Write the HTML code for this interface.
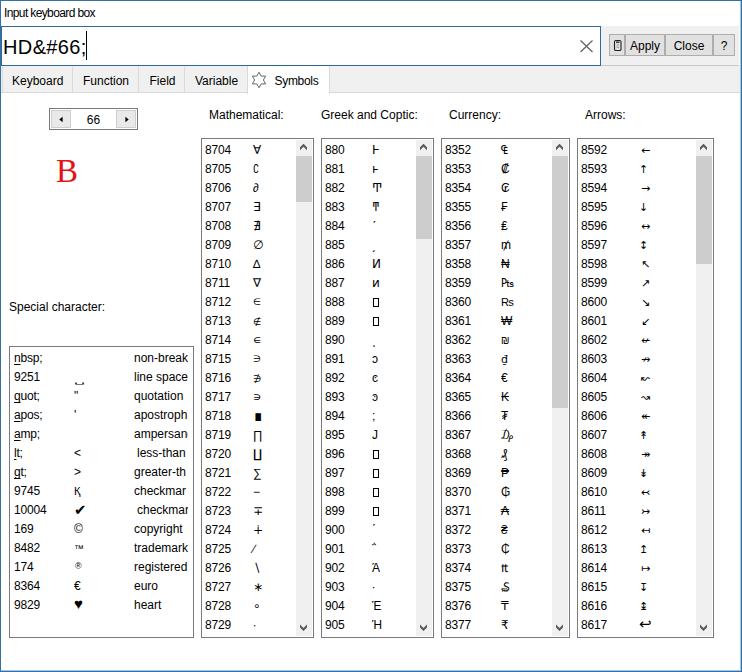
<!DOCTYPE html>
<html><head><meta charset="utf-8"><title>Input keyboard box</title>
<style>
html,body{margin:0;padding:0}
body{width:742px;height:672px;position:relative;overflow:hidden;background:#fff;font:12px/19px "Liberation Sans", "DejaVu Sans", sans-serif;color:#000}
div,span,svg,i{position:absolute;box-sizing:border-box}
u{text-decoration:underline;text-underline-offset:2px;text-decoration-skip-ink:none}
.win{left:0;top:0;width:742px;height:672px;border:1px solid #3470a5}
.edge-r{left:740px;top:1px;width:1px;height:670px;background:#9cc8ee}
.edge-b{left:1px;top:670px;width:740px;height:1px;background:#9cc8ee}
.title{left:4px;top:4px;letter-spacing:-0.62px;white-space:nowrap}
.grayp{left:601px;top:26px;width:138px;height:40px;background:#f0f0f0;border-bottom:1px solid #c8c8c8}
.tabbar{left:1px;top:66px;width:739px;height:27px;background:#f0f0f0;border-bottom:1px solid #d9d9d9}
.edit{left:1px;top:26px;width:600px;height:40px;background:#fff;border:1px solid #30689b}
.edit .t{left:1px;top:5px;font-size:20px;line-height:30px;white-space:nowrap;letter-spacing:0.37px}
.caret{left:86px;top:31px;width:1px;height:29px;background:#000}
.btn{top:34px;height:22px;background:#e1e1e1;border:1px solid #adadad;text-align:center;line-height:22px;white-space:nowrap}
.tab{top:67px;height:25px;background:#f0f0f0;border-left:1px solid #d9d9d9;border-right:1px solid #d9d9d9;line-height:25px;white-space:nowrap}
.tab span{top:2px}
.tab.sel{top:66px;height:28px;background:#fff;border-left:1px solid #d9d9d9;border-right:1px solid #d9d9d9}
.lbl{white-space:nowrap}
.lb{border:1px solid #7a7a7a;background:#fff;overflow:hidden}
.row{left:1px;height:19px;width:100%;white-space:nowrap}
.lb .row{margin-top:1px}
.n{left:2px;top:1px;letter-spacing:-0.2px}
.s{top:1px}
.sp .row{width:177px;overflow:hidden}
.sp .n{left:3px}
.sb{right:1px;top:1px;width:16px;height:496px;background:#f0f0f0}
.sb svg{left:0}
.sb .up{top:0}
.sb .dn{bottom:0}
.sb polygon{fill:#5a5a5a}
.thumb{left:0;top:16px;width:16px;background:#cdcdcd}
.tofu{display:inline-block;position:relative;width:6px;height:9px;border:1px solid #000;top:1px;left:1px}
.spin{left:49px;top:108px;width:89px;height:22px;border:1px solid #7a7a7a;background:#fff}
.spin .b{top:1px;width:20px;height:18px;background:#e9e9e9;border:1px solid #cfcfcf}
.spin .v{left:0;width:87px;text-align:center;top:1px;line-height:20px}
.bigB{left:56px;top:148px;font:33px/46px "Liberation Serif", serif;color:#e31414}
</style></head>
<body>
<div class="win"></div><div class="edge-r"></div><div class="edge-b"></div>
<div class="title">Input keyboard box</div>
<div class="grayp"></div>
<div class="tabbar"></div>
<div class="edit"><span class="t">HD&amp;#66;</span></div><div class="caret"></div>
<svg style="left:579px;top:39px" width="16" height="16" viewBox="0 0 16 16"><path d="M1.5 1.5 L13.5 13 M13.5 1.5 L1.5 13" stroke="#666" stroke-width="1.3" fill="none"/></svg>
<div class="btn" style="left:609px;width:16px"><svg style="left:3px;top:4px" width="10" height="13" viewBox="0 0 10 13"><rect x="1.5" y="1.5" width="6.5" height="10" rx="1.3" fill="none" stroke="#222" stroke-width="1.1"/><path d="M3 3.2 H6.5" stroke="#222" stroke-width="1.3"/><path d="M3.5 6 H6 M3.5 8.3 H6" stroke="#888" stroke-width="0.8"/></svg></div>
<div class="btn" style="left:625px;width:40px">Apply</div>
<div class="btn" style="left:665px;width:48px">Close</div>
<div class="btn" style="left:713px;width:22px">?</div>
<div class="tab" style="left:2px;width:71px"><span style="left:9px">Keyboard</span></div>
<div class="tab" style="left:72px;width:67px"><span style="left:10px">Function</span></div>
<div class="tab" style="left:138px;width:47px"><span style="left:10.5px">Field</span></div>
<div class="tab" style="left:184px;width:64px"><span style="left:10px">Variable</span></div>
<div class="tab sel" style="left:247px;width:83px"><svg style="left:2px;top:5px" width="18" height="18" viewBox="0 0 18 18"><polygon points="9,1.2 11.2,5.1 15.6,5.1 13.4,9 15.6,12.9 11.2,12.9 9,16.8 6.8,12.9 2.4,12.9 4.6,9 2.4,5.1 6.8,5.1" fill="none" stroke="#555" stroke-width="0.9"/></svg><span style="left:26.5px;top:3px;line-height:25px;letter-spacing:-0.3px">Symbols</span></div>
<div class="spin"><span class="v">66</span><div class="b" style="left:1px"><svg style="left:6px;top:5px" width="6" height="7" viewBox="0 0 6 7"><path d="M4.6 0.8 L1.3 3.5 L4.6 6.2 Z" fill="#000"/></svg></div><div class="b" style="left:66px"><svg style="left:7px;top:5px" width="6" height="7" viewBox="0 0 6 7"><path d="M1.4 0.8 L4.7 3.5 L1.4 6.2 Z" fill="#000"/></svg></div></div>
<div class="bigB">B</div>
<div class="lbl" style="left:209px;top:106px">Mathematical:</div>
<div class="lbl" style="left:321px;top:106px">Greek and Coptic:</div>
<div class="lbl" style="left:449px;top:106px">Currency:</div>
<div class="lbl" style="left:585px;top:106px">Arrows:</div>
<div class="lbl" style="left:9px;top:298px">Special character:</div>
<div class="lb sp" style="left:9px;width:185px;top:346px;height:292px">
<div class="row" style="top:0px"><span class="n"><u>n</u>bsp;</span><span class="s" style="left:63px"></span><span class="s" style="left:123px">non-break</span></div>
<div class="row" style="top:19px"><span class="n">9251</span><span class="s" style="left:63px"><b style="display:inline-block;font-weight:normal;transform:scale(1.45,.55);transform-origin:0 88%">␣</b></span><span class="s" style="left:123px">line space</span></div>
<div class="row" style="top:38px"><span class="n"><u>q</u>uot;</span><span class="s" style="left:63px">"</span><span class="s" style="left:123px">quotation</span></div>
<div class="row" style="top:57px"><span class="n"><u>a</u>pos;</span><span class="s" style="left:63px">'</span><span class="s" style="left:123px">apostroph</span></div>
<div class="row" style="top:76px"><span class="n"><u>a</u>mp;</span><span class="s" style="left:63px"></span><span class="s" style="left:123px">ampersand</span></div>
<div class="row" style="top:95px"><span class="n"><u>l</u>t;</span><span class="s" style="left:63px">&lt;</span><span class="s" style="left:126px">less-than</span></div>
<div class="row" style="top:114px"><span class="n"><u>g</u>t;</span><span class="s" style="left:63px">&gt;</span><span class="s" style="left:123px">greater-th</span></div>
<div class="row" style="top:133px"><span class="n">9745</span><span class="s" style="left:63px"><b style="font-weight:normal;font-size:11px">Қ</b></span><span class="s" style="left:123px">checkmar</span></div>
<div class="row" style="top:152px"><span class="n">10004</span><span class="s" style="left:63px"><b style="font-weight:normal;font-size:15px;line-height:12px;position:relative;top:1px">✔</b></span><span class="s" style="left:126px">checkmar</span></div>
<div class="row" style="top:171px"><span class="n">169</span><span class="s" style="left:63px">©</span><span class="s" style="left:123px">copyright</span></div>
<div class="row" style="top:190px"><span class="n">8482</span><span class="s" style="left:63px"><b style="font-weight:normal;font-size:10px">™</b></span><span class="s" style="left:123px">trademark</span></div>
<div class="row" style="top:209px"><span class="n">174</span><span class="s" style="left:63px"><b style="font-weight:normal;font-size:9px;position:relative;top:-2px;left:1px">®</b></span><span class="s" style="left:123px">registered</span></div>
<div class="row" style="top:228px"><span class="n">8364</span><span class="s" style="left:63px">€</span><span class="s" style="left:123px">euro</span></div>
<div class="row" style="top:247px"><span class="n">9829</span><span class="s" style="left:63px"><b style="font-weight:normal;font-size:15px;line-height:12px">♥</b></span><span class="s" style="left:123px">heart</span></div>
</div>
<div class="lb" style="left:201px;width:113px;top:138px;height:500px">
<div class="row" style="top:0px"><span class="n">8704</span><span class="s" style="left:50px;">∀</span></div>
<div class="row" style="top:19px"><span class="n">8705</span><span class="s" style="left:50px;transform:scaleX(.8);transform-origin:0 50%">∁</span></div>
<div class="row" style="top:38px"><span class="n">8706</span><span class="s" style="left:50px;">∂</span></div>
<div class="row" style="top:57px"><span class="n">8707</span><span class="s" style="left:50px;">∃</span></div>
<div class="row" style="top:76px"><span class="n">8708</span><span class="s" style="left:50px;">∄</span></div>
<div class="row" style="top:95px"><span class="n">8709</span><span class="s" style="left:50px;">∅</span></div>
<div class="row" style="top:114px"><span class="n">8710</span><span class="s" style="left:50px;">∆</span></div>
<div class="row" style="top:133px"><span class="n">8711</span><span class="s" style="left:50px;">∇</span></div>
<div class="row" style="top:152px"><span class="n">8712</span><span class="s" style="left:50px;font-size:9px">∈</span></div>
<div class="row" style="top:171px"><span class="n">8713</span><span class="s" style="left:50px;font-size:9.5px">∉</span></div>
<div class="row" style="top:190px"><span class="n">8714</span><span class="s" style="left:50px;">∊</span></div>
<div class="row" style="top:209px"><span class="n">8715</span><span class="s" style="left:50px;font-size:9px">∋</span></div>
<div class="row" style="top:228px"><span class="n">8716</span><span class="s" style="left:50px;font-size:9.5px">∌</span></div>
<div class="row" style="top:247px"><span class="n">8717</span><span class="s" style="left:50px;">∍</span></div>
<div class="row" style="top:266px"><span class="n">8718</span><span class="s" style="left:50px;font-size:16px;top:0px">∎</span></div>
<div class="row" style="top:285px"><span class="n">8719</span><span class="s" style="left:50px;">∏</span></div>
<div class="row" style="top:304px"><span class="n">8720</span><span class="s" style="left:50px;">∐</span></div>
<div class="row" style="top:323px"><span class="n">8721</span><span class="s" style="left:50px;">∑</span></div>
<div class="row" style="top:342px"><span class="n">8722</span><span class="s" style="left:50px;">−</span></div>
<div class="row" style="top:361px"><span class="n">8723</span><span class="s" style="left:50px;">∓</span></div>
<div class="row" style="top:380px"><span class="n">8724</span><span class="s" style="left:50px;">∔</span></div>
<div class="row" style="top:399px"><span class="n">8725</span><span class="s" style="left:50px;">∕</span></div>
<div class="row" style="top:418px"><span class="n">8726</span><span class="s" style="left:50px;">∖</span></div>
<div class="row" style="top:437px"><span class="n">8727</span><span class="s" style="left:50px;">∗</span></div>
<div class="row" style="top:456px"><span class="n">8728</span><span class="s" style="left:50px;">∘</span></div>
<div class="row" style="top:475px"><span class="n">8729</span><span class="s" style="left:50px;">∙</span></div>
<div class="sb"><svg class="up" width="16" height="16" viewBox="0 0 16 16"><polygon points="7.5,3.8 11,7.3 11,10.3 7.5,6.8 4,10.3 4,7.3"/></svg><div class="thumb" style="height:46px"></div><svg class="dn" width="16" height="16" viewBox="0 0 16 16"><polygon points="7.5,11 11,7.5 11,4.5 7.5,8 4,4.5 4,7.5"/></svg></div>
</div>
<div class="lb" style="left:321px;width:113px;top:138px;height:500px">
<div class="row" style="top:0px"><span class="n">880</span><span class="s" style="left:49px;">Ͱ</span></div>
<div class="row" style="top:19px"><span class="n">881</span><span class="s" style="left:49px;">ͱ</span></div>
<div class="row" style="top:38px"><span class="n">882</span><span class="s" style="left:49px;">Ͳ</span></div>
<div class="row" style="top:57px"><span class="n">883</span><span class="s" style="left:49px;">ͳ</span></div>
<div class="row" style="top:76px"><span class="n">884</span><span class="s" style="left:49px;">ʹ</span></div>
<div class="row" style="top:95px"><span class="n">885</span><span class="s" style="left:49px;">͵</span></div>
<div class="row" style="top:114px"><span class="n">886</span><span class="s" style="left:49px;">Ͷ</span></div>
<div class="row" style="top:133px"><span class="n">887</span><span class="s" style="left:49px;">ͷ</span></div>
<div class="row" style="top:152px"><span class="n">888</span><span class="s" style="left:49px;"><i class="tofu"></i></span></div>
<div class="row" style="top:171px"><span class="n">889</span><span class="s" style="left:49px;"><i class="tofu"></i></span></div>
<div class="row" style="top:190px"><span class="n">890</span><span class="s" style="left:49px;">ͺ</span></div>
<div class="row" style="top:209px"><span class="n">891</span><span class="s" style="left:49px;">ͻ</span></div>
<div class="row" style="top:228px"><span class="n">892</span><span class="s" style="left:49px;">ͼ</span></div>
<div class="row" style="top:247px"><span class="n">893</span><span class="s" style="left:49px;">ͽ</span></div>
<div class="row" style="top:266px"><span class="n">894</span><span class="s" style="left:49px;">;</span></div>
<div class="row" style="top:285px"><span class="n">895</span><span class="s" style="left:49px;">J</span></div>
<div class="row" style="top:304px"><span class="n">896</span><span class="s" style="left:49px;"><i class="tofu"></i></span></div>
<div class="row" style="top:323px"><span class="n">897</span><span class="s" style="left:49px;"><i class="tofu"></i></span></div>
<div class="row" style="top:342px"><span class="n">898</span><span class="s" style="left:49px;"><i class="tofu"></i></span></div>
<div class="row" style="top:361px"><span class="n">899</span><span class="s" style="left:49px;"><i class="tofu"></i></span></div>
<div class="row" style="top:380px"><span class="n">900</span><span class="s" style="left:49px;">΄</span></div>
<div class="row" style="top:399px"><span class="n">901</span><span class="s" style="left:49px;">΅</span></div>
<div class="row" style="top:418px"><span class="n">902</span><span class="s" style="left:49px;">Ά</span></div>
<div class="row" style="top:437px"><span class="n">903</span><span class="s" style="left:49px;">·</span></div>
<div class="row" style="top:456px"><span class="n">904</span><span class="s" style="left:49px;">Έ</span></div>
<div class="row" style="top:475px"><span class="n">905</span><span class="s" style="left:49px;">Ή</span></div>
<div class="sb"><svg class="up" width="16" height="16" viewBox="0 0 16 16"><polygon points="7.5,3.8 11,7.3 11,10.3 7.5,6.8 4,10.3 4,7.3"/></svg><div class="thumb" style="height:83px"></div><svg class="dn" width="16" height="16" viewBox="0 0 16 16"><polygon points="7.5,11 11,7.5 11,4.5 7.5,8 4,4.5 4,7.5"/></svg></div>
</div>
<div class="lb" style="left:441px;width:129px;top:138px;height:500px">
<div class="row" style="top:0px"><span class="n">8352</span><span class="s" style="left:58px;">₠</span></div>
<div class="row" style="top:19px"><span class="n">8353</span><span class="s" style="left:58px;">₡</span></div>
<div class="row" style="top:38px"><span class="n">8354</span><span class="s" style="left:58px;">₢</span></div>
<div class="row" style="top:57px"><span class="n">8355</span><span class="s" style="left:58px;">₣</span></div>
<div class="row" style="top:76px"><span class="n">8356</span><span class="s" style="left:58px;">₤</span></div>
<div class="row" style="top:95px"><span class="n">8357</span><span class="s" style="left:58px;">₥</span></div>
<div class="row" style="top:114px"><span class="n">8358</span><span class="s" style="left:58px;">₦</span></div>
<div class="row" style="top:133px"><span class="n">8359</span><span class="s" style="left:58px;">₧</span></div>
<div class="row" style="top:152px"><span class="n">8360</span><span class="s" style="left:58px;font-size:11px">₨</span></div>
<div class="row" style="top:171px"><span class="n">8361</span><span class="s" style="left:58px;">₩</span></div>
<div class="row" style="top:190px"><span class="n">8362</span><span class="s" style="left:58px;font-size:10px">₪</span></div>
<div class="row" style="top:209px"><span class="n">8363</span><span class="s" style="left:58px;font-family:DejaVu Sans,sans-serif;font-size:11px">₫</span></div>
<div class="row" style="top:228px"><span class="n">8364</span><span class="s" style="left:58px;">€</span></div>
<div class="row" style="top:247px"><span class="n">8365</span><span class="s" style="left:58px;">₭</span></div>
<div class="row" style="top:266px"><span class="n">8366</span><span class="s" style="left:58px;">₮</span></div>
<div class="row" style="top:285px"><span class="n">8367</span><span class="s" style="left:58px;">₯</span></div>
<div class="row" style="top:304px"><span class="n">8368</span><span class="s" style="left:58px;">₰</span></div>
<div class="row" style="top:323px"><span class="n">8369</span><span class="s" style="left:58px;">₱</span></div>
<div class="row" style="top:342px"><span class="n">8370</span><span class="s" style="left:58px;">₲</span></div>
<div class="row" style="top:361px"><span class="n">8371</span><span class="s" style="left:58px;">₳</span></div>
<div class="row" style="top:380px"><span class="n">8372</span><span class="s" style="left:58px;">₴</span></div>
<div class="row" style="top:399px"><span class="n">8373</span><span class="s" style="left:58px;">₵</span></div>
<div class="row" style="top:418px"><span class="n">8374</span><span class="s" style="left:58px;">₶</span></div>
<div class="row" style="top:437px"><span class="n">8375</span><span class="s" style="left:58px;">₷</span></div>
<div class="row" style="top:456px"><span class="n">8376</span><span class="s" style="left:58px;">₸</span></div>
<div class="row" style="top:475px"><span class="n">8377</span><span class="s" style="left:58px;">₹</span></div>
<div class="sb"><svg class="up" width="16" height="16" viewBox="0 0 16 16"><polygon points="7.5,3.8 11,7.3 11,10.3 7.5,6.8 4,10.3 4,7.3"/></svg><div class="thumb" style="height:252px"></div><svg class="dn" width="16" height="16" viewBox="0 0 16 16"><polygon points="7.5,11 11,7.5 11,4.5 7.5,8 4,4.5 4,7.5"/></svg></div>
</div>
<div class="lb" style="left:577px;width:137px;top:138px;height:500px">
<div class="row" style="top:0px"><span class="n">8592</span><span class="s" style="left:62px;font-family:DejaVu Sans,sans-serif;font-size:11px;">←</span></div>
<div class="row" style="top:19px"><span class="n">8593</span><span class="s" style="left:62px;font-family:DejaVu Sans,sans-serif;font-size:11px;margin-left:-2px">↑</span></div>
<div class="row" style="top:38px"><span class="n">8594</span><span class="s" style="left:62px;font-family:DejaVu Sans,sans-serif;font-size:11px;">→</span></div>
<div class="row" style="top:57px"><span class="n">8595</span><span class="s" style="left:62px;font-family:DejaVu Sans,sans-serif;font-size:11px;margin-left:-2px">↓</span></div>
<div class="row" style="top:76px"><span class="n">8596</span><span class="s" style="left:62px;font-family:DejaVu Sans,sans-serif;font-size:11px;">↔</span></div>
<div class="row" style="top:95px"><span class="n">8597</span><span class="s" style="left:62px;font-family:DejaVu Sans,sans-serif;font-size:11px;margin-left:-2px">↕</span></div>
<div class="row" style="top:114px"><span class="n">8598</span><span class="s" style="left:62px;font-family:DejaVu Sans,sans-serif;font-size:11px;">↖</span></div>
<div class="row" style="top:133px"><span class="n">8599</span><span class="s" style="left:62px;font-family:DejaVu Sans,sans-serif;font-size:11px;">↗</span></div>
<div class="row" style="top:152px"><span class="n">8600</span><span class="s" style="left:62px;font-family:DejaVu Sans,sans-serif;font-size:11px;">↘</span></div>
<div class="row" style="top:171px"><span class="n">8601</span><span class="s" style="left:62px;font-family:DejaVu Sans,sans-serif;font-size:11px;">↙</span></div>
<div class="row" style="top:190px"><span class="n">8602</span><span class="s" style="left:62px;font-family:DejaVu Sans,sans-serif;font-size:11px;">↚</span></div>
<div class="row" style="top:209px"><span class="n">8603</span><span class="s" style="left:62px;font-family:DejaVu Sans,sans-serif;font-size:11px;">↛</span></div>
<div class="row" style="top:228px"><span class="n">8604</span><span class="s" style="left:62px;font-family:DejaVu Sans,sans-serif;font-size:11px;">↜</span></div>
<div class="row" style="top:247px"><span class="n">8605</span><span class="s" style="left:62px;font-family:DejaVu Sans,sans-serif;font-size:11px;">↝</span></div>
<div class="row" style="top:266px"><span class="n">8606</span><span class="s" style="left:62px;font-family:DejaVu Sans,sans-serif;font-size:11px;">↞</span></div>
<div class="row" style="top:285px"><span class="n">8607</span><span class="s" style="left:62px;font-family:DejaVu Sans,sans-serif;font-size:11px;margin-left:-2px">↟</span></div>
<div class="row" style="top:304px"><span class="n">8608</span><span class="s" style="left:62px;font-family:DejaVu Sans,sans-serif;font-size:11px;">↠</span></div>
<div class="row" style="top:323px"><span class="n">8609</span><span class="s" style="left:62px;font-family:DejaVu Sans,sans-serif;font-size:11px;margin-left:-2px">↡</span></div>
<div class="row" style="top:342px"><span class="n">8610</span><span class="s" style="left:62px;font-family:DejaVu Sans,sans-serif;font-size:11px;">↢</span></div>
<div class="row" style="top:361px"><span class="n">8611</span><span class="s" style="left:62px;font-family:DejaVu Sans,sans-serif;font-size:11px;">↣</span></div>
<div class="row" style="top:380px"><span class="n">8612</span><span class="s" style="left:62px;font-family:DejaVu Sans,sans-serif;font-size:11px;">↤</span></div>
<div class="row" style="top:399px"><span class="n">8613</span><span class="s" style="left:62px;font-family:DejaVu Sans,sans-serif;font-size:11px;margin-left:-2px">↥</span></div>
<div class="row" style="top:418px"><span class="n">8614</span><span class="s" style="left:62px;font-family:DejaVu Sans,sans-serif;font-size:11px;">↦</span></div>
<div class="row" style="top:437px"><span class="n">8615</span><span class="s" style="left:62px;font-family:DejaVu Sans,sans-serif;font-size:11px;margin-left:-2px">↧</span></div>
<div class="row" style="top:456px"><span class="n">8616</span><span class="s" style="left:62px;font-family:DejaVu Sans,sans-serif;font-size:11px;margin-left:-2px">↨</span></div>
<div class="row" style="top:475px"><span class="n">8617</span><span class="s" style="left:62px;font-family:DejaVu Sans,sans-serif;font-size:11px;font-size:15px;line-height:15px;top:2px;margin-left:-2px">↩</span></div>
<div class="sb"><svg class="up" width="16" height="16" viewBox="0 0 16 16"><polygon points="7.5,3.8 11,7.3 11,10.3 7.5,6.8 4,10.3 4,7.3"/></svg><div class="thumb" style="height:108px"></div><svg class="dn" width="16" height="16" viewBox="0 0 16 16"><polygon points="7.5,11 11,7.5 11,4.5 7.5,8 4,4.5 4,7.5"/></svg></div>
</div>
</body></html>
